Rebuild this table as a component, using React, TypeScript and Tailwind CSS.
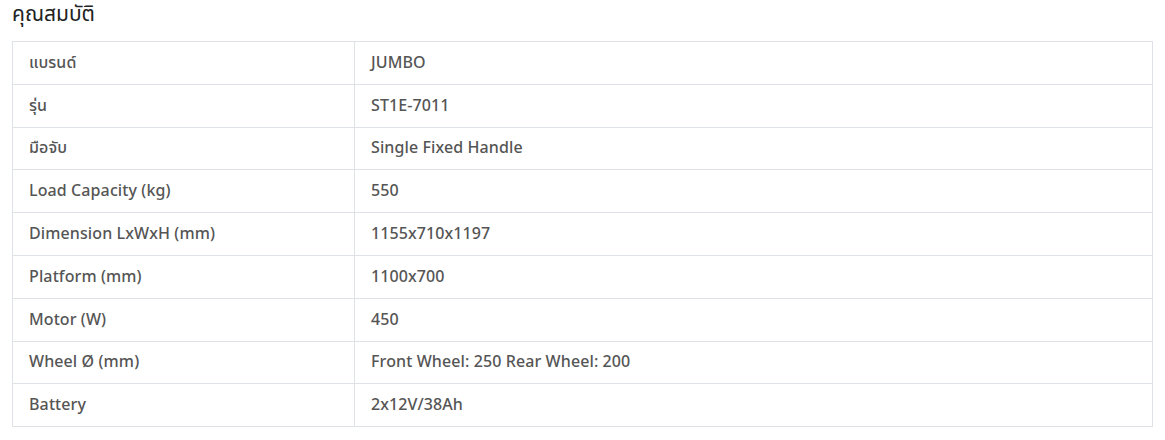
const specs: [string, string][] = [
  ["แบรนด์", "JUMBO"],
  ["รุ่น", "ST1E-7011"],
  ["มือจับ", "Single Fixed Handle"],
  ["Load Capacity (kg)", "550"],
  ["Dimension LxWxH (mm)", "1155x710x1197"],
  ["Platform (mm)", "1100x700"],
  ["Motor (W)", "450"],
  ["Wheel Ø (mm)", "Front Wheel: 250 Rear Wheel: 200"],
  ["Battery", "2x12V/38Ah"],
];

export default function App() {
  return (
    <div
      className="min-h-[440px] w-full bg-white pl-3 pr-3 pt-[1px] text-[#555]"
      style={{ fontFamily: '"Noto Sans Thai", "Noto Sans", "Open Sans", sans-serif' }}
    >
      <h3 className="h-[40px] text-[21px] leading-[28px] text-[#222]">คุณสมบัติ</h3>
      <table className="w-[1141px] border-collapse border border-[#dee2e6] text-[16px] font-medium tracking-[0.1px]">
        <tbody>
          {specs.map(([label, value]) => (
            <tr key={label} className="h-[42.8px] border-b border-[#dee2e6]">
              <td className="w-[342px] border-r border-[#dee2e6] px-4 align-middle">{label}</td>
              <td className="px-4 align-middle">{value}</td>
            </tr>
          ))}
        </tbody>
      </table>
    </div>
  );
}
